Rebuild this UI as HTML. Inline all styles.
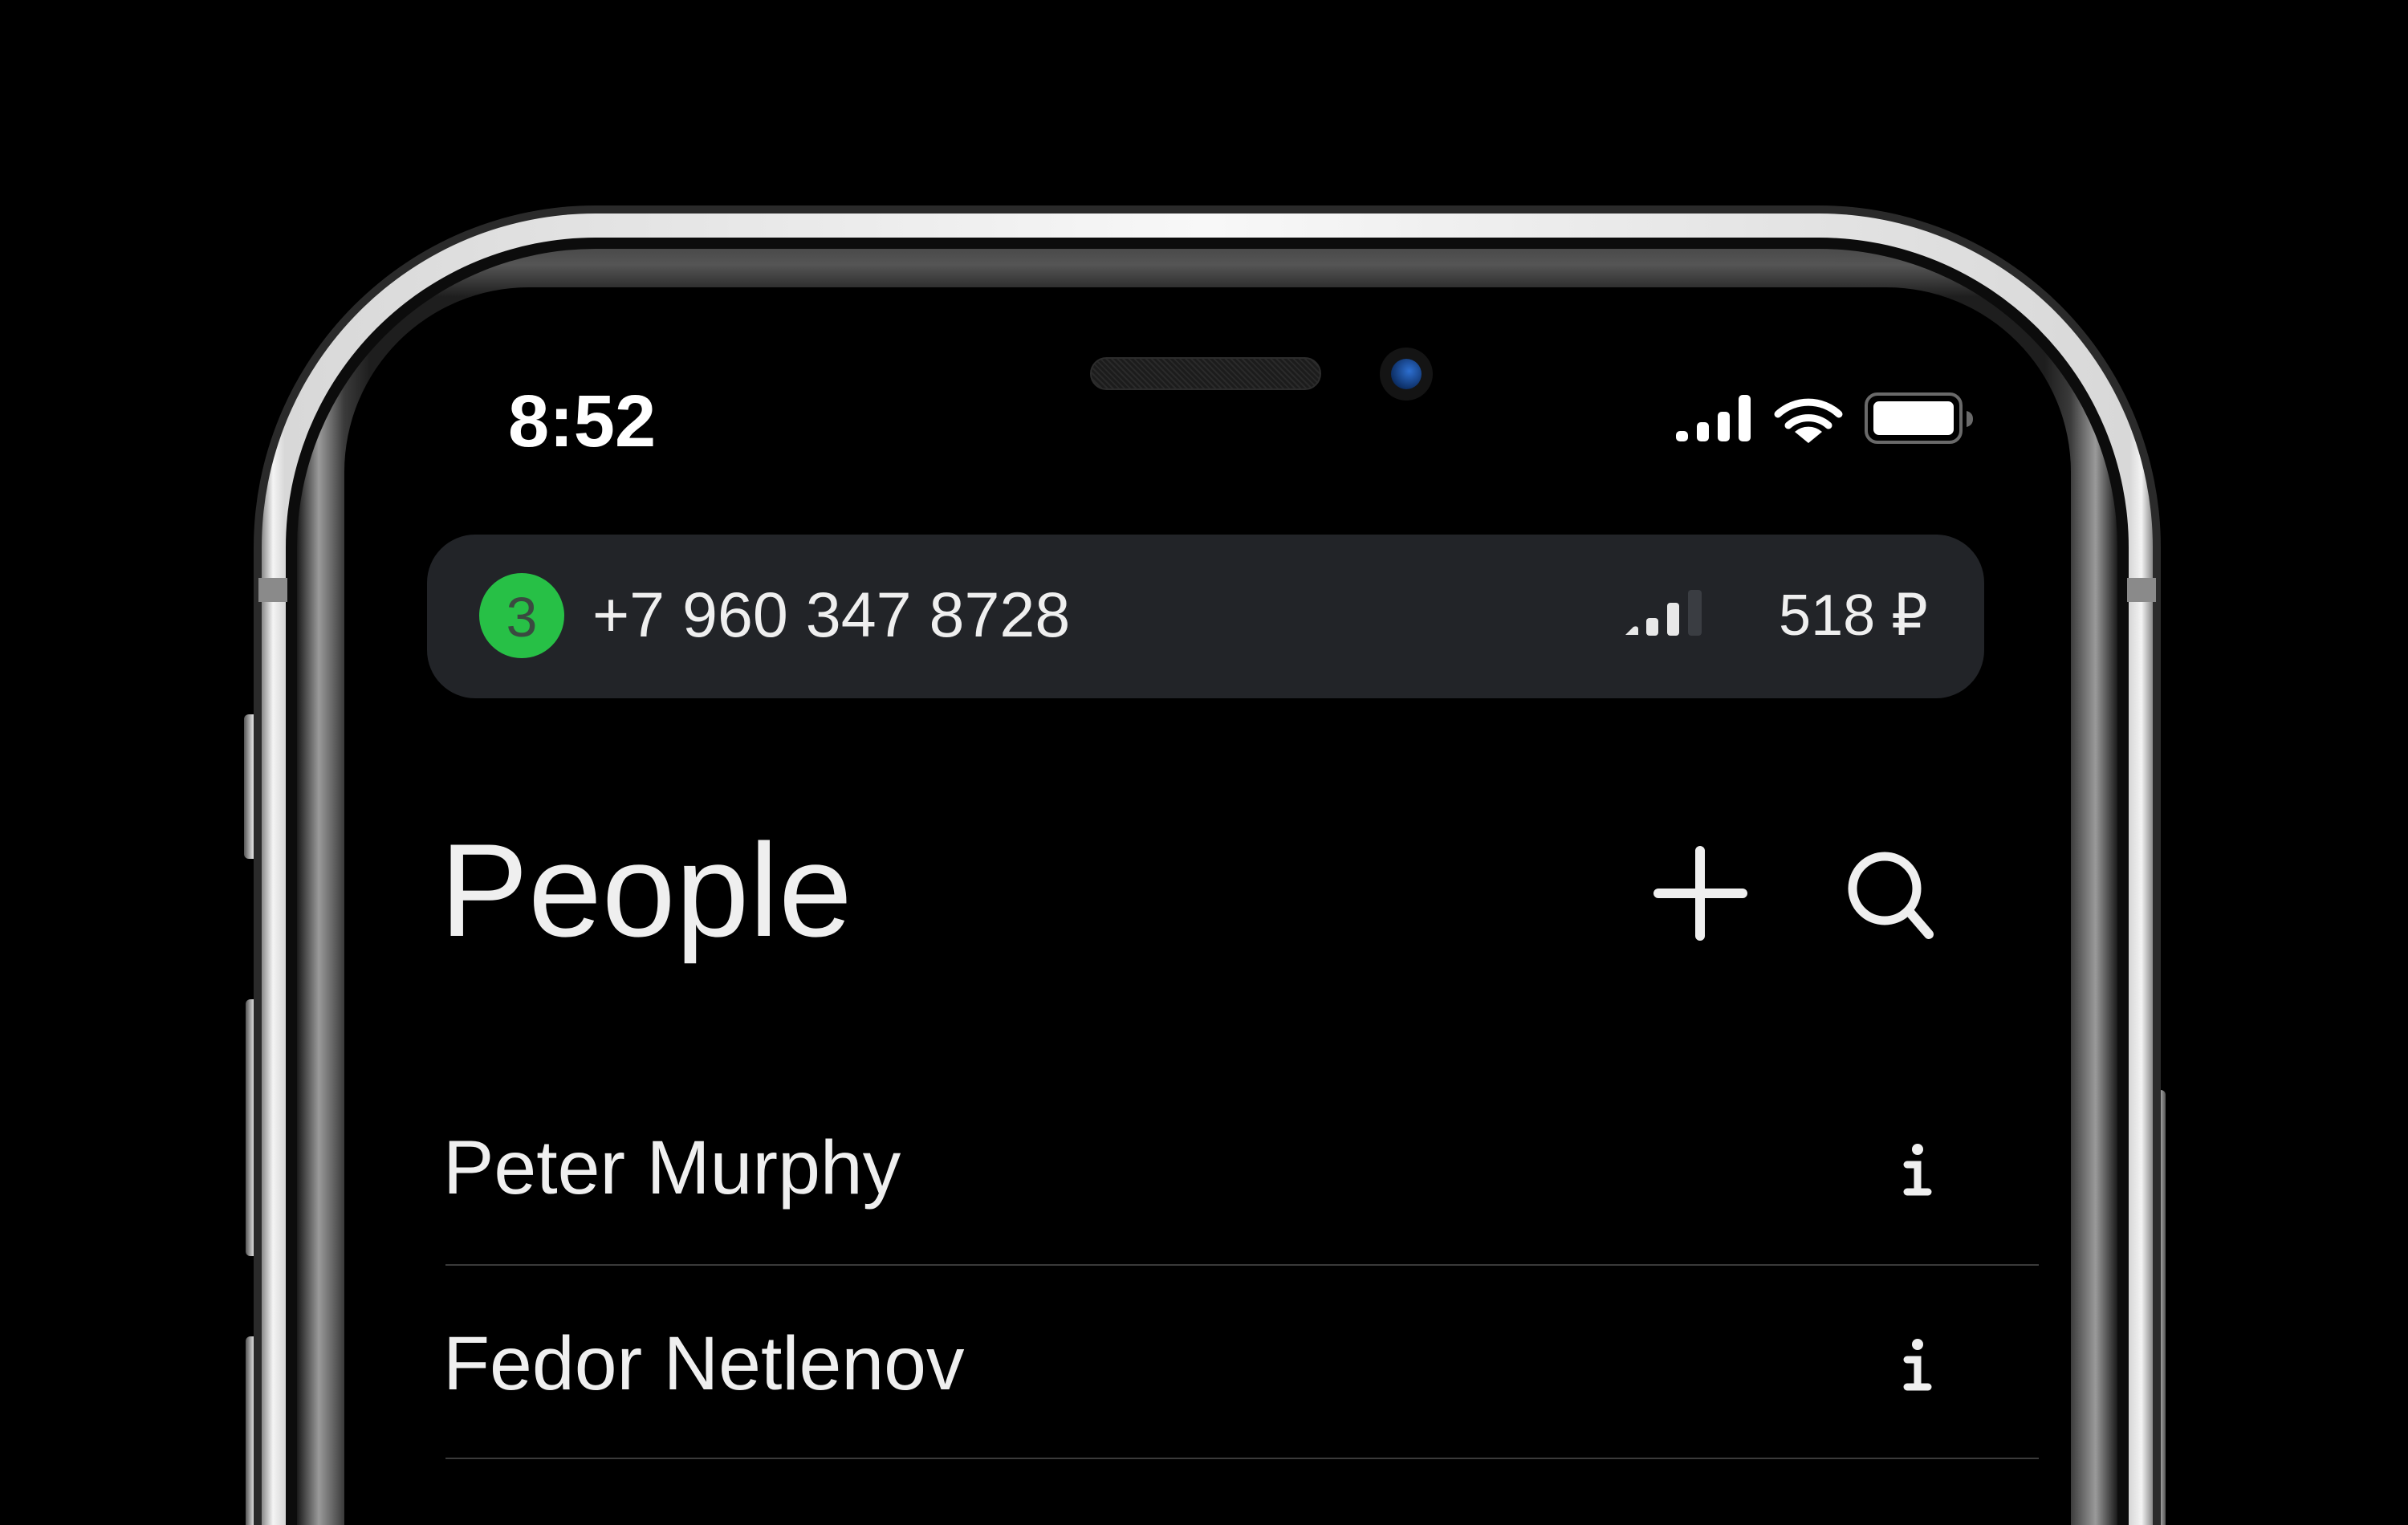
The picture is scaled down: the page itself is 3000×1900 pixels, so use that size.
<!DOCTYPE html>
<html><head><meta charset="utf-8"><style>
html,body{margin:0;padding:0;background:#000;width:3000px;height:1900px;overflow:hidden;position:relative;font-family:"Liberation Sans",sans-serif}
div{position:absolute;box-sizing:border-box}
.t{color:#efefef;line-height:1;white-space:nowrap}
</style></head><body>
<!-- side buttons -->
<div style="left:304px;top:890px;width:22px;height:180px;border-radius:6px;background:linear-gradient(90deg,#555,#ddd,#777)"></div>
<div style="left:306px;top:1245px;width:20px;height:320px;border-radius:6px;background:linear-gradient(90deg,#555,#ddd,#777)"></div>
<div style="left:306px;top:1665px;width:20px;height:235px;border-radius:6px 6px 0 0;background:linear-gradient(90deg,#555,#ddd,#777)"></div>
<div style="left:2676px;top:1358px;width:22px;height:542px;border-radius:6px 6px 0 0;background:linear-gradient(90deg,#777,#ddd,#555)"></div>
<!-- frame -->
<div style="left:316px;top:256px;width:2376px;height:1644px;border-radius:426px 426px 0 0;background:#2a2a2a"></div>
<div style="left:326px;top:266px;width:2356px;height:1634px;border-radius:416px 416px 0 0;background:linear-gradient(90deg,#8a8a8a 0%,#f4f4f4 0.6%,#d8d8d8 1.2%,#f8f8f8 50%,#d8d8d8 98.8%,#f4f4f4 99.4%,#8a8a8a 100%)"></div>
<div style="left:356px;top:296px;width:2296px;height:1604px;border-radius:386px 386px 0 0;background:#0c0c0c"></div>
<div style="left:370px;top:310px;width:2268px;height:1590px;border-radius:372px 372px 0 0;background:linear-gradient(180deg,#4a4a4a 0,#555 20px,rgba(40,40,40,0) 60px),linear-gradient(90deg,#1a1a1a 0%,#9a9a9a 1.2%,#3a3a3a 2.6%,#1e1e1e 4%,#1e1e1e 96%,#3a3a3a 97.4%,#9a9a9a 98.8%,#1a1a1a 100%)"></div>
<div style="left:429px;top:358px;width:2151px;height:1542px;border-radius:230px 230px 0 0;background:#000"></div>
<!-- antenna bands -->
<div style="left:322px;top:720px;width:36px;height:30px;background:#8a8a8a"></div>
<div style="left:2650px;top:720px;width:36px;height:30px;background:#8a8a8a"></div>
<!-- speaker & camera -->
<div style="left:1358px;top:445px;width:288px;height:41px;border-radius:21px;background:repeating-linear-gradient(45deg,#1c1c1c 0 3px,#2a2a2a 3px 5px);border:2px solid #2c2c2c"></div>
<div style="left:1719px;top:433px;width:66px;height:66px;border-radius:50%;background:#141414"></div>
<div style="left:1733px;top:447px;width:38px;height:38px;border-radius:50%;background:radial-gradient(circle at 60% 40%,#2d6fd0,#0d2f66 70%,#061530)"></div>
<!-- status bar -->
<div class="t" style="left:633px;top:479px;font-size:92px;font-weight:bold;color:#fff">8:52</div>
<svg style="position:absolute;left:0;top:0" width="3000" height="1900">
 <g fill="#fff">
  <rect x="2088" y="537" width="15" height="13" rx="5"/>
  <rect x="2114" y="526" width="15" height="24" rx="5"/>
  <rect x="2140" y="513" width="15" height="37" rx="5"/>
  <rect x="2166" y="492" width="15" height="58" rx="5"/>
  <path d="M2253 552 L2236 538 A26 26 0 0 1 2270 538 Z"/>
  <path d="M2228 530 A38 38 0 0 1 2278 530" stroke="#fff" stroke-width="9" fill="none" stroke-linecap="round"/>
  <path d="M2215 516 A56 56 0 0 1 2291 516" stroke="#fff" stroke-width="9" fill="none" stroke-linecap="round"/>
  <rect x="2334" y="500" width="100" height="42" rx="7"/>
 </g>
 <rect x="2325" y="491" width="118" height="60" rx="14" fill="none" stroke="#6a6a6a" stroke-width="4"/>
 <path d="M2450 512 Q2458 514 2458 522 Q2458 530 2450 532 Z" fill="#6a6a6a"/>
</svg>
<!-- pill -->
<div style="left:532px;top:666px;width:1940px;height:204px;border-radius:60px;background:#222428"></div>
<div style="left:597px;top:714px;width:106px;height:106px;border-radius:50%;background:#27c046"></div>
<div class="t" style="left:597px;top:734px;width:106px;text-align:center;font-size:70px;color:#3a4a40">3</div>
<div class="t" style="left:738px;top:726px;font-size:79px">+7 960 347 8728</div>
<svg style="position:absolute;left:0;top:0" width="3000" height="1900">
 <path d="M2025 791 L2035 781 Q2041 779 2041 784 L2041 791 Z" fill="#e8e8e8"/>
 <rect x="2051" y="770" width="15" height="22" rx="4" fill="#e8e8e8"/>
 <rect x="2077" y="751" width="15" height="41" rx="4" fill="#e8e8e8"/>
 <rect x="2103" y="735" width="17" height="57" rx="4" fill="#3a3d42"/>
</svg>
<div class="t" style="right:598px;top:731px;font-size:72px">518 ₽</div>
<!-- heading -->
<div class="t" style="left:548px;top:1027px;font-size:165px">People</div>
<svg style="position:absolute;left:0;top:0" width="3000" height="1900">
 <g stroke="#efefef" stroke-linecap="round" fill="none">
  <path d="M2118 1060 V1166 M2066 1113 H2171" stroke-width="12"/>
  <circle cx="2348" cy="1107" r="40" stroke-width="11"/>
  <path d="M2378 1135 L2403 1164" stroke-width="12"/>
  <g stroke-width="9">
   <path d="M2376 1451 H2389 V1485 M2376 1485 H2402"/>
   <path d="M2376 1694 H2389 V1728 M2376 1728 H2402"/>
  </g>
 </g>
 <circle cx="2389" cy="1432" r="7" fill="#efefef"/>
 <circle cx="2389" cy="1675" r="7" fill="#efefef"/>
 <rect x="555" y="1575" width="1985" height="2" fill="#3a3a3a"/>
 <rect x="555" y="1816" width="1985" height="2" fill="#3a3a3a"/>
</svg>
<div class="t" style="left:552px;top:1408px;font-size:95px">Peter Murphy</div>
<div class="t" style="left:552px;top:1652px;font-size:95px">Fedor Netlenov</div>
</body></html>
